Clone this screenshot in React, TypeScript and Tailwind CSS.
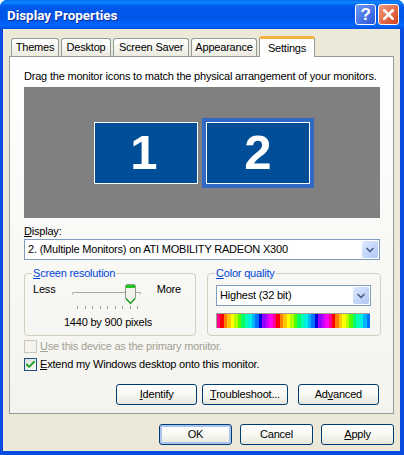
import { Check, ChevronDown, X } from "lucide-react"

const bands = [
  "#ff0090", "#ff0000", "#ff8000", "#ffc800", "#ffff00", "#b4ff00", "#50ff00", "#00ff64", "#00ffb4", "#00f0e0",
  "#00b4ff", "#0070ff", "#0000e0", "#9000ff", "#c800ff", "#ff00f0",
]
const bar = [...bands, ...bands, ...bands].slice(0, 44)
const ticks = [0, 1, 2, 3, 4, 5, 6, 7, 8]

function Tab({ label, width }: { label: string; width: string }) {
  return (
    <div className={`${width} h-[18px] mt-[2px] border border-b-0 border-[#919b9c] rounded-t-[3px] bg-gradient-to-b from-white to-[#ecebe0] flex items-center justify-center text-black`}>
      {label}
    </div>
  )
}

function Monitor({ n, className }: { n: number; className?: string }) {
  return (
    <div className={`${className ?? ""} w-[104px] h-[62px] border border-white bg-[#004e98] flex items-center justify-center text-white text-[49px] font-bold leading-none tracking-normal`}>
      {n}
    </div>
  )
}

function DropArrow() {
  return (
    <div className="w-[16px] h-[17px] rounded-[2px] bg-gradient-to-br from-[#dfe8fe] to-[#aec7f6] flex items-center justify-center">
      <ChevronDown size={12} strokeWidth={3.5} className="text-[#4d6185]" />
    </div>
  )
}

function Btn({ children, className }: { children: React.ReactNode; className: string }) {
  return (
    <button className={`${className} h-[21px] rounded-[3px] border border-[#003c74] bg-gradient-to-b from-white via-[#f8f8f3] to-[#e8e6db] text-black flex items-center justify-center`}>
      <span>{children}</span>
    </button>
  )
}

export default function App() {
  return (
    <div className="w-[404px] h-[455px] bg-white overflow-hidden text-[11px] tracking-[-0.2px] leading-[13px] font-['Liberation_Sans',sans-serif] text-black">
      <div className="h-full rounded-t-[7px] bg-[#0a4be2] flex flex-col overflow-hidden">
        {/* title bar */}
        <div className="h-[29px] shrink-0 flex items-center pl-[7px] pr-[5px] bg-[linear-gradient(180deg,#0a6cf2_0%,#0a86ff_8%,#0058ee_22%,#0054e8_60%,#0066ff_88%,#0050dc_100%)]">
          <span className="text-white font-bold font-['Roboto',sans-serif] tracking-normal text-[13.4px] pt-px flex-1 [text-shadow:1px_1px_0_#0f2f9c]">Display Properties</span>
          <div className="w-[21px] h-[21px] rounded-[3px] border border-white bg-gradient-to-br from-[#6f98f5] to-[#2a55d8] text-white font-bold text-[17px] flex items-center justify-center">?</div>
          <div className="w-[21px] h-[21px] ml-[2px] rounded-[3px] border border-white bg-gradient-to-br from-[#ef9a7c] to-[#d23c12] text-white flex items-center justify-center">
            <X size={17} strokeWidth={3.5} />
          </div>
        </div>

        {/* client area */}
        <div className="flex-1 ml-[3px] mr-[4px] mb-[4px] bg-[#ece9d8] px-[6px] flex flex-col">
          <div className="h-[27px] pt-[7px] pl-[2px] flex gap-[2px] relative z-10">
            <Tab label="Themes" width="w-[48px]" />
            <Tab label="Desktop" width="w-[50px]" />
            <Tab label="Screen Saver" width="w-[76px]" />
            <Tab label="Appearance" width="w-[66px]" />
            <div className="w-[56px] h-[21px] -mb-px border-x border-[#919b9c] rounded-t-[3px] bg-white border-t-[3px] border-t-[#f5b13e] flex items-center justify-center">
              Settings
            </div>
          </div>

          <div className="w-[385px] h-[358px] border border-[#919b9c] bg-gradient-to-b from-white to-[#f4f3ee] px-[14px] flex flex-col">
            <p className="mt-[13px] h-[13px] whitespace-nowrap">Drag the monitor icons to match the physical arrangement of your monitors.</p>

            <div className="mt-[4px] w-[356px] h-[131px] shrink-0 bg-[#808080] flex items-center pl-[70px]">
              <Monitor n={1} className="pr-[4px]" />
              <div className="ml-[4px] border-[4px] border-[#316ac5]"><Monitor n={2} /></div>
            </div>

            <label className="mt-[7px] h-[13px] block"><u>D</u>isplay:</label>
            <div className="mt-[1px] w-[356px] h-[21px] shrink-0 border border-[#7f9db9] bg-white flex items-center justify-between pl-[3px] pr-px">
              <span>2. (Multiple Monitors) on ATI MOBILITY RADEON X300</span>
              <DropArrow />
            </div>

            <div className="mt-[7px] flex gap-[11px] w-[357px]">
              <fieldset className="w-[172px] shrink-0 h-[69px] border border-[#d0d0bf] rounded-[4px] px-[8px]">
                <legend className="px-px -ml-px text-[#0046d5]"><u>S</u>creen resolution</legend>
                <div className="relative h-[55px]">
                  <div className="flex justify-between text-black pt-[3px] pr-[6px]">
                    <span>Less</span>
                    <span>More</span>
                  </div>
                  <div className="absolute left-[39px] top-[12px] w-[69px] h-[3px] rounded-full bg-[#f7f6ee] border-t border-x border-[#a9a99c]" />
                  <svg className="absolute left-[92px] top-[4px]" width="11" height="21" viewBox="0 0 11 21">
                    <path d="M1.5.5h8l1 1v12.5l-5 5.5-5-5.5V1.5z" fill="#f3f2ea" stroke="#8d9a88" />
                    <path d="M1 1h9v3H1z" fill="#21c321" />
                    <path d="M1 14.5l4.5 5 4.5-5" fill="none" stroke="#21a121" strokeWidth="1.5" />
                  </svg>
                  <div className="absolute left-[44px] top-[26px] w-[61px] flex justify-between">
                    {ticks.map((t) => (
                      <div key={t} className="w-px h-[3px] bg-[#a1a192]" />
                    ))}
                  </div>
                  <div className="absolute inset-x-0 top-[36px] text-center pr-[4px]">1440 by 900 pixels</div>
                </div>
              </fieldset>

              <fieldset className="w-[174px] shrink-0 h-[69px] border border-[#d0d0bf] rounded-[4px] pl-[8px]">
                <legend className="px-px -ml-px text-[#0046d5]"><u>C</u>olor quality</legend>
                <div className="w-[155px] h-[21px] mt-[5px] border border-[#7f9db9] bg-white flex items-center justify-between pl-[3px] pr-px">
                  <span>Highest (32 bit)</span>
                  <DropArrow />
                </div>
                <div className="w-[154px] h-[15px] mt-[7px] border-t border-l border-[#a0a08e] flex overflow-hidden">
                  {bar.map((c, i) => (
                    <div key={i} className="flex-1" style={{ backgroundColor: c }} />
                  ))}
                </div>
              </fieldset>
            </div>

            <div className="mt-[4px] h-[13px] flex items-center text-[#a1a192]">
              <div className="w-[13px] h-[13px] border border-[#cac8bb] bg-[#f4f3ee]" />
              <span className="ml-[3px]"><u>U</u>se this device as the primary monitor.</span>
            </div>
            <div className="mt-[5px] h-[13px] flex items-center">
              <div className="w-[13px] h-[13px] border border-[#1c5180] bg-gradient-to-br from-[#dcdcd7] to-white flex items-center justify-center">
                <Check size={11} strokeWidth={4} className="text-[#21a121]" />
              </div>
              <span className="ml-[3px]"><u>E</u>xtend my Windows desktop onto this monitor.</span>
            </div>

            <div className="mt-[13px] flex pl-[92px]">
              <Btn className="w-[82px]"><u>I</u>dentify</Btn>
              <Btn className="w-[86px] ml-[5px]"><u>T</u>roubleshoot...</Btn>
              <Btn className="w-[82px] ml-[10px]">Ad<u>v</u>anced</Btn>
            </div>
          </div>

          <div className="mt-[10px] flex justify-end gap-[8px]">
            <Btn className="w-[73px] shadow-[inset_0_0_0_2px_#a9c4f0]">OK</Btn>
            <Btn className="w-[73px]">Cancel</Btn>
            <Btn className="w-[73px]"><u>A</u>pply</Btn>
          </div>
        </div>
      </div>
    </div>
  )
}
